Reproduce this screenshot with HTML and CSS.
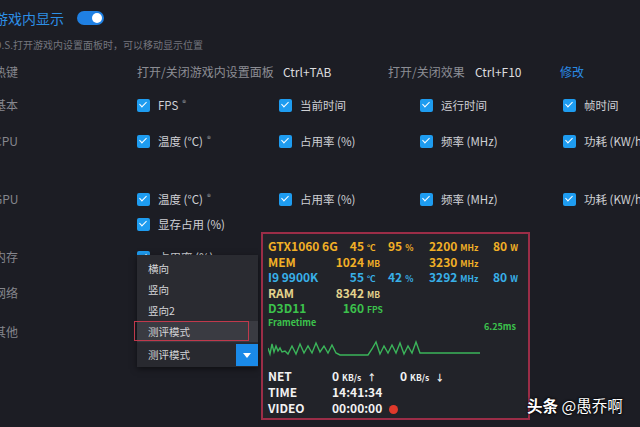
FILE: index.html
```html
<!DOCTYPE html>
<html lang="zh-CN">
<head>
<meta charset="UTF-8">
<title>游戏内显示设置</title>
<link rel="stylesheet" href="styles.css">
</head>
<body>
<div class="page">
  <div class="title-row">
    <span class="title">游戏内显示</span>
    <span class="toggle"><span class="knob"></span></span>
  </div>
  <p class="desc">O.S.打开游戏内设置面板时，可以移动显示位置</p>

  <div class="row hotkey">
    <span class="label">热键</span>
    <span class="hk-name w1">打开/关闭游戏内设置面板</span>
    <span class="hk-key w2">Ctrl+TAB</span>
    <span class="hk-name w3">打开/关闭效果</span>
    <span class="hk-key w4">Ctrl+F10</span>
    <span class="edit">修改</span>
  </div>

  <div class="row r-basic">
    <span class="label">基本</span>
    <div class="opts">
      <label class="opt"><span class="cb"></span>FPS<sup>®</sup></label>
      <label class="opt"><span class="cb"></span>当前时间</label>
      <label class="opt"><span class="cb"></span>运行时间</label>
      <label class="opt"><span class="cb"></span>帧时间</label>
    </div>
  </div>

  <div class="row r-cpu">
    <span class="label">CPU</span>
    <div class="opts">
      <label class="opt"><span class="cb"></span>温度 (°C)<sup>®</sup></label>
      <label class="opt"><span class="cb"></span>占用率 (%)</label>
      <label class="opt"><span class="cb"></span>频率 (MHz)</label>
      <label class="opt"><span class="cb"></span>功耗 (KW/h)</label>
    </div>
  </div>

  <div class="row r-gpu">
    <span class="label">GPU</span>
    <div class="opts">
      <label class="opt"><span class="cb"></span>温度 (°C)<sup>®</sup></label>
      <label class="opt"><span class="cb"></span>占用率 (%)</label>
      <label class="opt"><span class="cb"></span>频率 (MHz)</label>
      <label class="opt"><span class="cb"></span>功耗 (KW/h)</label>
      <label class="opt"><span class="cb"></span>显存占用 (%)</label>
    </div>
  </div>

  <div class="row r-mem">
    <span class="label">内存</span>
    <div class="opts">
      <label class="opt"><span class="cb"></span>占用率 (%)</label>
    </div>
  </div>

  <div class="row r-net">
    <span class="label">网络</span>
  </div>

  <div class="row r-other">
    <span class="label">其他</span>
  </div>
</div>

<div class="dd">
  <div class="menu">
    <div class="item">横向</div>
    <div class="item">竖向</div>
    <div class="item">竖向2</div>
    <div class="item active">测评模式</div>
  </div>
  <div class="sel">
    <span class="sel-text">测评模式</span>
    <span class="btn"></span>
  </div>
  <div class="mark"></div>
</div>

<div class="osd">
  <div class="stats">
    <div class="srow gtx">
      <span>GTX1060 6G</span>
      <span><span class="n">45</span><span class="u">℃</span></span>
      <span>95<span class="u">%</span></span>
      <span>2200<span class="u">MHz</span></span>
      <span>80<span class="u">W</span></span>
    </div>
    <div class="srow gtx">
      <span>MEM</span>
      <span><span class="n">1024</span><span class="u">MB</span></span>
      <span></span>
      <span>3230<span class="u">MHz</span></span>
      <span></span>
    </div>
    <div class="srow cpu">
      <span>I9 9900K</span>
      <span><span class="n">55</span><span class="u">℃</span></span>
      <span>42<span class="u">%</span></span>
      <span>3292<span class="u">MHz</span></span>
      <span>80<span class="u">W</span></span>
    </div>
    <div class="srow ram">
      <span>RAM</span>
      <span><span class="n">8342</span><span class="u">MB</span></span>
      <span></span><span></span><span></span>
    </div>
    <div class="srow d3d">
      <span>D3D11</span>
      <span><span class="n">160</span><span class="u">FPS</span></span>
      <span></span><span></span><span></span>
    </div>
  </div>

  <div class="ft">
    <span>Frametime</span>
    <span class="ft-val">6.25ms</span>
  </div>

  <svg class="graph" width="212" height="24" viewBox="0 0 212 24">
    <polyline fill="none" stroke="#3bb55a" stroke-width="1.4"
      points="0,8 2,14 4,4 6,12 8,6 10,11 12,8 14,12 17,11 20,14 24,6 28,14 32,4 36,13 40,6 44,13 48,3 52,12 56,6 60,13 64,5 68,13 72,15 100,15 104,9 108,2 112,14 116,6 120,13 124,5 128,13 132,3 136,14 140,6 144,13 148,2 152,13 212,13"/>
  </svg>

  <div class="net">
    <span>NET</span>
    <span>0<span class="u">KB/s</span><span class="arr">↑</span></span>
    <span>0<span class="u">KB/s</span><span class="arr">↓</span></span>
    <span>TIME</span>
    <span>14:41:34</span>
    <span></span>
    <span>VIDEO</span>
    <span>00:00:00<span class="rec"></span></span>
    <span></span>
  </div>
</div>

<div class="wm"><b>头条</b> @愚乔啊</div>
</body>
</html>
```

FILE: styles.css
```css
body {
    margin: 0;
    width: 640px;
    height: 427px;
    overflow: hidden;
    position: relative;
    background-color: #1c1d24;
    font-family: "Noto Sans CJK SC", "Noto Sans", sans-serif;
}

.page {
    margin-left: -6px;
    padding-top: 4px;
    white-space: nowrap;
}

.title-row {
    display: flex;
    align-items: center;
    height: 28px;
}

.title {
    width: 83px;
    font-size: 14px;
    color: #2d8fe6;
}

.toggle {
    position: relative;
    width: 27px;
    height: 14px;
    border-radius: 7px;
    background-color: #1f80e3;
}

.knob {
    position: absolute;
    right: 2px;
    top: 2px;
    width: 10px;
    height: 10px;
    border-radius: 50%;
    background-color: #fff;
}

.desc {
    margin: 6px 0 0;
    font-size: 10px;
    line-height: 14px;
    color: #74757d;
}

.row {
    display: flex;
    align-items: flex-start;
}

.label {
    width: 143px;
    flex-shrink: 0;
    font-size: 12px;
    line-height: 20px;
    color: #85868d;
}

.hotkey {
    margin-top: 10px;
    font-size: 12px;
    line-height: 20px;
}

.hk-name {
    color: #8c8d94;
}

.hk-key {
    color: #dcdcdf;
}

.w1 { width: 146px; }
.w2 { width: 105px; }
.w3 { width: 87px; }
.w4 { width: 85px; }

.edit {
    color: #2a8be6;
}

.r-basic { margin-top: 13px; }
.r-cpu { margin-top: 16px; }
.r-gpu { margin-top: 38px; }
.r-mem { margin-top: 13px; }
.r-net { margin-top: 16px; }
.r-other { margin-top: 19px; }

.opts {
    display: grid;
    grid-template-columns: 142px 141px 143px 200px;
    row-gap: 5px;
}

.opt {
    display: flex;
    align-items: center;
    height: 20px;
    font-size: 11.5px;
    color: #cfd0d5;
}

.cb {
    position: relative;
    width: 13px;
    height: 13px;
    margin-right: 8px;
    border-radius: 2px;
    background-color: #1e9cf0;
    flex-shrink: 0;
}

.cb::after {
    content: "";
    position: absolute;
    left: 4px;
    top: 1.5px;
    width: 3px;
    height: 6px;
    border-right: 1.6px solid #fff;
    border-bottom: 1.6px solid #fff;
    transform: rotate(45deg);
}

.opt sup {
    font-size: 8px;
    color: #a0a1a8;
    margin-left: 4px;
    position: relative;
    top: -3px;
}

/* dropdown */
.dd {
    position: absolute;
    left: 137px;
    top: 255px;
    width: 121px;
    box-shadow: 0 2px 6px rgba(0, 0, 0, 0.5);
}

.menu {
    background-color: #2a2b31;
    padding: 2.5px 0 1.5px;
}

.item {
    height: 21px;
    line-height: 21px;
    padding-left: 11px;
    font-size: 10.5px;
    color: #d5d5d8;
}

.item.active {
    background-color: #3a3b42;
}

.sel {
    display: flex;
    height: 24px;
    background-color: #28292f;
}

.sel-text {
    flex: 1;
    padding-left: 11px;
    line-height: 24px;
    font-size: 10.5px;
    color: #d5d5d8;
}

.btn {
    position: relative;
    width: 22px;
    height: 22px;
    margin-top: 1px;
    background-color: #1a8ae8;
}

.btn::after {
    content: "";
    position: absolute;
    left: 7px;
    top: 9px;
    border-left: 4px solid transparent;
    border-right: 4px solid transparent;
    border-top: 5px solid #fff;
}

.mark {
    position: absolute;
    left: -3px;
    top: 66px;
    width: 113px;
    height: 18px;
    border: 1.5px solid #c0394c;
}

/* overlay panel */
.osd {
    position: absolute;
    left: 261px;
    top: 232px;
    width: 269px;
    height: 188px;
    box-sizing: border-box;
    border: 2px solid #9b2d47;
    background-color: #222329;
    padding: 4px 0 0 5px;
    white-space: nowrap;
    font-weight: bold;
}

.stats {
    display: grid;
    grid-template-columns: 66px 54px 41px 64px auto;
    grid-auto-rows: 15.5px;
    font-size: 12px;
    line-height: 15.5px;
}

.srow {
    display: contents;
}

.gtx { color: #f2b026; }
.cpu { color: #38b0e8; }
.ram { color: #e3d28c; }
.d3d { color: #3cc24c; }

.n {
    display: inline-block;
    width: 30px;
    text-align: right;
}

.u {
    font-size: 8.5px;
    margin-left: 3px;
}

.ft {
    display: flex;
    justify-content: space-between;
    width: 248px;
    height: 16px;
    font-size: 9px;
    color: #3cc24c;
    line-height: 14px;
}

.ft-val {
    align-self: flex-end;
    line-height: 10px;
}

.graph {
    display: block;
    margin-top: 8px;
}

.net {
    display: grid;
    grid-template-columns: 64px 68px auto;
    grid-auto-rows: 16px;
    margin-top: 4px;
    font-size: 12px;
    line-height: 16px;
    color: #f2f2f2;
}

.arr {
    font-size: 9px;
    margin-left: 6px;
}

.rec {
    display: inline-block;
    width: 9px;
    height: 9px;
    margin-left: 7px;
    border-radius: 50%;
    background-color: #e0392b;
    vertical-align: -1px;
}

.wm {
    position: absolute;
    left: 527px;
    top: 394px;
    font-size: 15.5px;
    color: #fff;
    text-shadow: 0 0 2px #000, 0 0 3px #000;
}
```
